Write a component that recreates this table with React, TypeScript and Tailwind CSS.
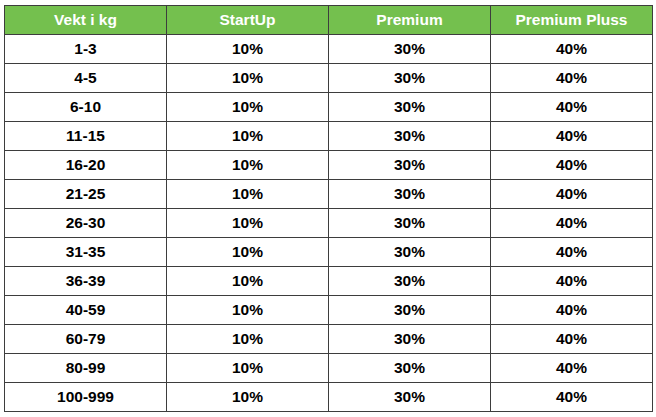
const rows = [
  "1-3",
  "4-5",
  "6-10",
  "11-15",
  "16-20",
  "21-25",
  "26-30",
  "31-35",
  "36-39",
  "40-59",
  "60-79",
  "80-99",
  "100-999",
];

export default function App() {
  return (
    <div className="w-[656px] h-[417px] bg-white pt-[5px] pl-[4px] font-['Liberation_Sans',Arial,sans-serif]">
      <table className="w-[649px] border-collapse table-fixed text-[15.5px] font-bold text-center">
        <thead>
          <tr className="h-[29px] bg-[#74c04e] text-white">
            <th className="border border-[#3d3d3d] font-bold">Vekt i kg</th>
            <th className="border border-[#3d3d3d] font-bold">StartUp</th>
            <th className="border border-[#3d3d3d] font-bold">Premium</th>
            <th className="border border-[#3d3d3d] font-bold">Premium Pluss</th>
          </tr>
        </thead>
        <tbody className="text-black">
          {rows.map((r) => (
            <tr key={r} className="h-[29px]">
              <td className="border border-[#3d3d3d]">{r}</td>
              <td className="border border-[#3d3d3d]">10%</td>
              <td className="border border-[#3d3d3d]">30%</td>
              <td className="border border-[#3d3d3d]">40%</td>
            </tr>
          ))}
        </tbody>
      </table>
    </div>
  );
}
